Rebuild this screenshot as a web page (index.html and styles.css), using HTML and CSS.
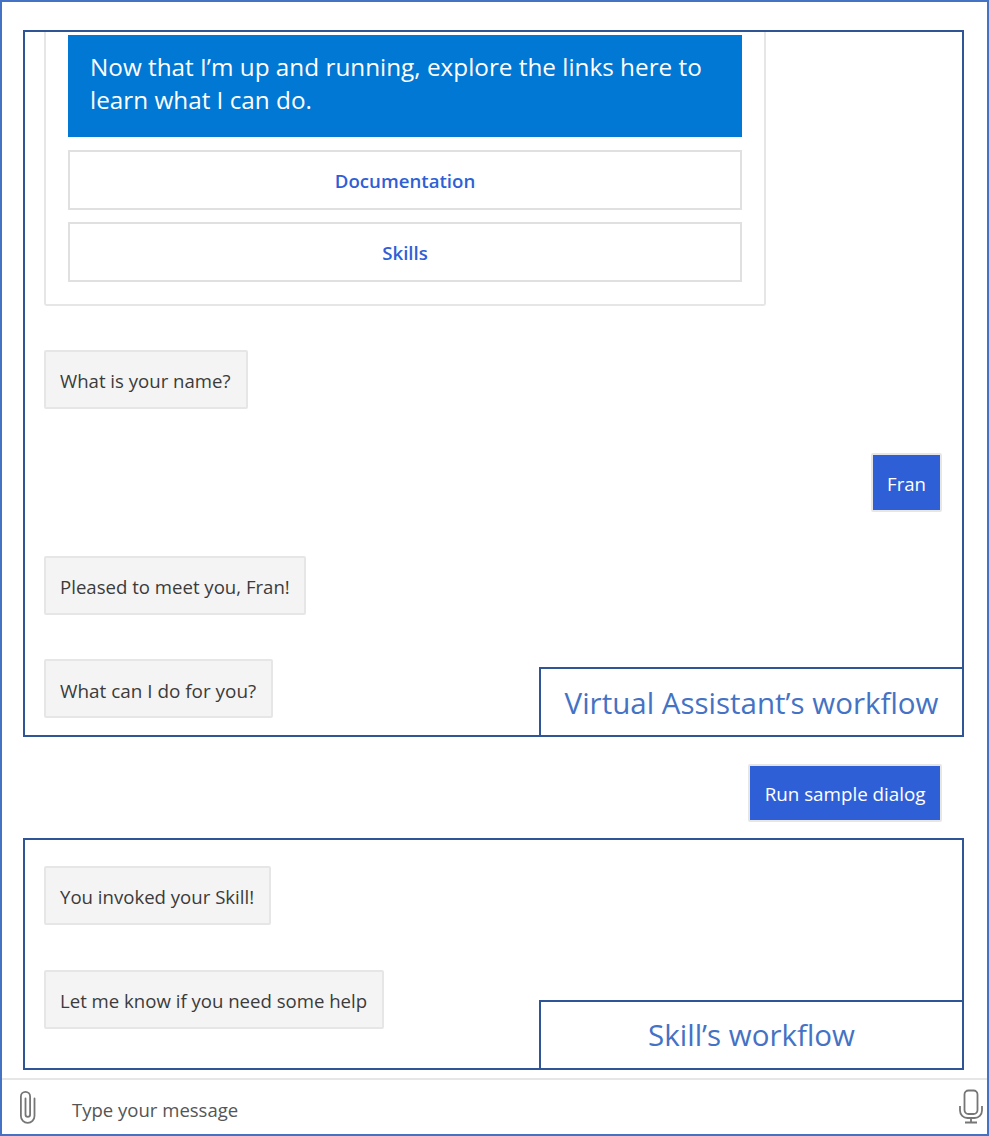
FILE: index.html
```html
<!DOCTYPE html>
<html lang="en">
<head>
<meta charset="utf-8">
<title>Virtual Assistant chat</title>
<link rel="stylesheet" href="styles.css">
</head>
<body>
<div class="window">
  <main class="transcript">
    <section class="frame frame-va">
      <div class="card">
        <div class="card-banner">Now that I’m up and running, explore the links here to learn what I can do.</div>
        <button class="card-action">Documentation</button>
        <button class="card-action">Skills</button>
      </div>
      <div class="bubble bubble-q1">What is your name?</div>
      <div class="bubble bubble-user bubble-fran">Fran</div>
      <div class="bubble bubble-q2">Pleased to meet you, Fran!</div>
      <div class="bubble bubble-q3">What can I do for you?</div>
      <div class="callout callout-va">Virtual Assistant’s workflow</div>
    </section>
    <div class="user-row"><div class="bubble bubble-user bubble-run">Run sample dialog</div></div>
    <section class="frame frame-skill">
      <div class="bubble">You invoked your Skill!</div>
      <div class="bubble bubble-q5">Let me know if you need some help</div>
      <div class="callout callout-skill">Skill’s workflow</div>
    </section>
  </main>
  <footer class="composer">
    <svg class="icon" width="22" height="36" viewBox="0 0 22 36" fill="none" stroke="#767676" stroke-width="1.8" stroke-linecap="round">
      <path d="M9.5 9.5V25.5a2.3 2.3 0 0 0 4.6 0V7.5a4.6 4.6 0 0 0-9.2 0V27a6.8 6.8 0 0 0 13.6 0V9.5"/>
    </svg>
    <span class="placeholder">Type your message</span>
    <svg class="icon icon-mic" width="26" height="36" viewBox="0 0 26 36" fill="none" stroke="#767676" stroke-width="1.8">
      <rect x="7.5" y="1.5" width="13" height="23.5" rx="4"/>
      <path d="M3 17v4.5a7.5 7.5 0 0 0 7.5 7.5h7a7.5 7.5 0 0 0 7.5-7.5V17M14 29v4.5M8 33.5h12"/>
    </svg>
  </footer>
</div>
</body>
</html>
```
FILE: styles.css
```css
* { box-sizing: border-box; }
html, body { margin: 0; padding: 0; background: #fff; }
body { font-family: "Open Sans", "Noto Sans", sans-serif; color: #3b3b3b; }

.window {
  width: 989px;
  height: 1136px;
  border: 2px solid #4472c4;
  display: flex;
  flex-direction: column;
  overflow: hidden;
}
.transcript {
  flex: 1;
  padding: 28px 23px 0 21px;
}
.frame {
  position: relative;
  border: 2px solid #2f5597;
}
.frame-va { height: 707px; padding: 0 20px 0 19px; display: flex; flex-direction: column; align-items: flex-start; }
.frame-skill { height: 232px; padding: 26px 20px 0 19px; display: flex; flex-direction: column; align-items: flex-start; }

.card {
  width: 722px;
  height: 274px;
  padding: 3px 22px 0;
  border: 2px solid #e6e6e6;
  border-top: 0;
  border-radius: 0 0 3px 3px;
  display: flex;
  flex-direction: column;
}
.card-banner {
  height: 102px;
  padding: 15px 22px 0;
  margin-bottom: 13px;
  background: #0078d4;
  color: #fff;
  font-size: 24.3px;
  line-height: 33px;
}
.card-action {
  height: 60px;
  margin-bottom: 12px;
  padding: 0;
  background: #fff;
  border: 2px solid #e0e0e0;
  color: #2f5fd6;
  font: 600 18.65px "Open Sans", sans-serif;
}

.bubble {
  height: 59px;
  padding: 2px 14.5px 0 14px;
  display: flex;
  align-items: center;
  background: #f4f4f4;
  border: 2px solid #e6e6e6;
  border-radius: 2px;
  font-size: 18.6px;
  white-space: nowrap;
}
.bubble-user { background: #2f5fd6; color: #fff; }
.bubble-run { height: 58px; padding: 1px 14.5px 0 15px; font-size: 18.8px; }
.bubble-q1 { margin-top: 44px; width: 204px; }
.bubble-fran { margin-top: 44px; align-self: flex-end; padding: 2px 14px 0; }
.bubble-q2 { margin-top: 44px; }
.bubble-q3 { margin-top: 44px; padding-top: 4px; font-size: 18.9px; }
.bubble-q5 { margin-top: 45px; }

.user-row { display: flex; justify-content: flex-end; padding: 27px 22px 16px 0; }

.callout {
  position: absolute;
  right: -2px;
  bottom: -2px;
  width: 425px;
  height: 70px;
  border: 2px solid #2f5597;
  background: #fff;
  color: #4472c4;
  font-size: 29.5px;
  display: flex;
  align-items: center;
  justify-content: center;
}
.callout-skill { padding-bottom: 2px; }

.composer {
  height: 56px;
  border-top: 2px solid #e6e6e6;
  display: flex;
  align-items: center;
  padding: 0 4px 0 14px;
}
.placeholder { margin-left: 34px; padding-top: 4px; font-size: 18.55px; color: #555; flex: 1; }
.icon { flex: none; }
```
